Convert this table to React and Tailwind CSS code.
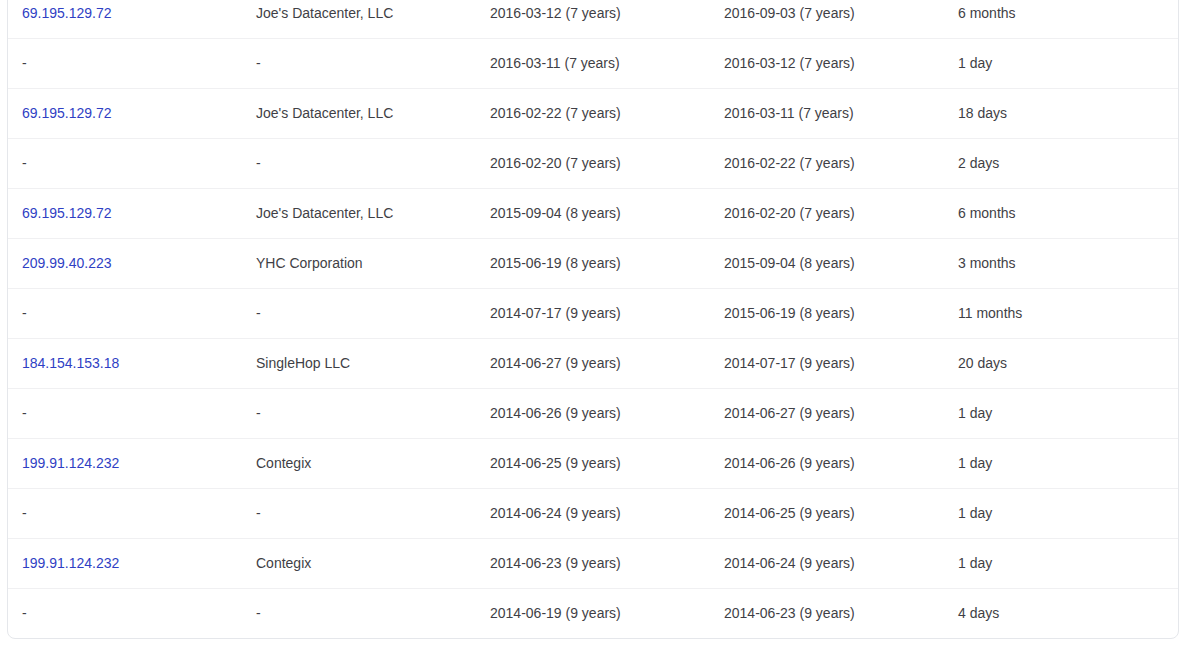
const rows = [
  ['69.195.129.72', "Joe's Datacenter, LLC", '2016-03-12 (7 years)', '2016-09-03 (7 years)', '6 months'],
  ['-', '-', '2016-03-11 (7 years)', '2016-03-12 (7 years)', '1 day'],
  ['69.195.129.72', "Joe's Datacenter, LLC", '2016-02-22 (7 years)', '2016-03-11 (7 years)', '18 days'],
  ['-', '-', '2016-02-20 (7 years)', '2016-02-22 (7 years)', '2 days'],
  ['69.195.129.72', "Joe's Datacenter, LLC", '2015-09-04 (8 years)', '2016-02-20 (7 years)', '6 months'],
  ['209.99.40.223', 'YHC Corporation', '2015-06-19 (8 years)', '2015-09-04 (8 years)', '3 months'],
  ['-', '-', '2014-07-17 (9 years)', '2015-06-19 (8 years)', '11 months'],
  ['184.154.153.18', 'SingleHop LLC', '2014-06-27 (9 years)', '2014-07-17 (9 years)', '20 days'],
  ['-', '-', '2014-06-26 (9 years)', '2014-06-27 (9 years)', '1 day'],
  ['199.91.124.232', 'Contegix', '2014-06-25 (9 years)', '2014-06-26 (9 years)', '1 day'],
  ['-', '-', '2014-06-24 (9 years)', '2014-06-25 (9 years)', '1 day'],
  ['199.91.124.232', 'Contegix', '2014-06-23 (9 years)', '2014-06-24 (9 years)', '1 day'],
  ['-', '-', '2014-06-19 (9 years)', '2014-06-23 (9 years)', '4 days'],
]

export default function App(){
  return (
    <div className="h-[650px] overflow-hidden bg-white" style={{fontFamily: '"Liberation Sans", Arial, sans-serif'}}>
      <div className="-mt-[12px] ml-[7px] w-[1172px] border border-[#e5e7eb] rounded-b-lg overflow-hidden">
        {rows.map((r, i) => (
          <div key={i} className={`grid grid-cols-5 items-center pb-[2px] text-sm text-[#3f3f46] ${i < rows.length - 1 ? 'h-[50px] border-b border-[#f0f0f2]' : 'h-[49px]'}`}>
            {r.map((c, j) => (
              <div key={j} className="pl-[14px]">
                {j === 0 && c !== '-' ? <a href="#" className="text-[#2f3fc4]">{c}</a> : c}
              </div>
            ))}
          </div>
        ))}
      </div>
    </div>
  )
}
